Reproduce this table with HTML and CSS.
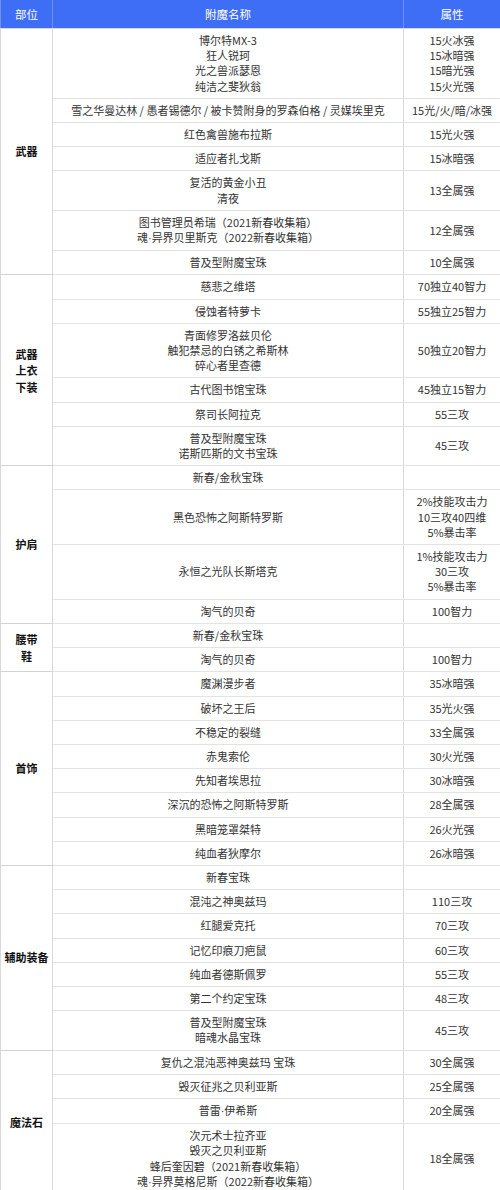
FILE: index.html
```html
<!DOCTYPE html>
<html lang="zh-CN">
<head>
<meta charset="utf-8">
<title>附魔表</title>
<link rel="stylesheet" href="styles.css">
</head>
<body>
<table class="enchant">
  <colgroup>
    <col class="c-part">
    <col class="c-name">
    <col class="c-attr">
  </colgroup>
  <thead>
    <tr><th>部位</th><th>附魔名称</th><th>属性</th></tr>
  </thead>
  <tbody>
    <tr><td class="part" rowspan="7">武器</td><td>博尔特MX-3<br>狂人锐珂<br>光之兽派瑟恩<br>纯洁之斐狄翁</td><td>15火冰强<br>15冰暗强<br>15暗光强<br>15火光强</td></tr>
    <tr><td>雪之华曼达林 / 愚者锡德尔 / 被卡赞附身的罗森伯格 / 灵媒埃里克</td><td>15光/火/暗/冰强</td></tr>
    <tr><td>红色禽兽施布拉斯</td><td>15光火强</td></tr>
    <tr><td>适应者扎戈斯</td><td>15冰暗强</td></tr>
    <tr><td>复活的黄金小丑<br>清夜</td><td>13全属强</td></tr>
    <tr><td>图书管理员希瑞（2021新春收集箱）<br>魂<span class="dot">·</span>异界贝里斯克（2022新春收集箱）</td><td>12全属强</td></tr>
    <tr><td>普及型附魔宝珠</td><td>10全属强</td></tr>

    <tr><td class="part" rowspan="6">武器<br>上衣<br>下装</td><td>慈悲之维塔</td><td>70独立40智力</td></tr>
    <tr><td>侵蚀者特萝卡</td><td>55独立25智力</td></tr>
    <tr><td>青面修罗洛兹贝伦<br>触犯禁忌的白锈之希斯林<br>碎心者里查德</td><td>50独立20智力</td></tr>
    <tr><td>古代图书馆宝珠</td><td>45独立15智力</td></tr>
    <tr><td>祭司长阿拉克</td><td>55三攻</td></tr>
    <tr><td>普及型附魔宝珠<br>诺斯匹斯的文书宝珠</td><td>45三攻</td></tr>

    <tr><td class="part" rowspan="4">护肩</td><td>新春/金秋宝珠</td><td></td></tr>
    <tr><td>黑色恐怖之阿斯特罗斯</td><td>2%技能攻击力<br>10三攻40四维<br>5%暴击率</td></tr>
    <tr><td>永恒之光队长斯塔克</td><td>1%技能攻击力<br>30三攻<br>5%暴击率</td></tr>
    <tr><td>淘气的贝奇</td><td>100智力</td></tr>

    <tr><td class="part" rowspan="2">腰带<br>鞋</td><td>新春/金秋宝珠</td><td></td></tr>
    <tr><td>淘气的贝奇</td><td>100智力</td></tr>

    <tr><td class="part" rowspan="8">首饰</td><td>魔渊漫步者</td><td>35冰暗强</td></tr>
    <tr><td>破坏之王后</td><td>35光火强</td></tr>
    <tr><td>不稳定的裂缝</td><td>33全属强</td></tr>
    <tr><td>赤鬼索伦</td><td>30火光强</td></tr>
    <tr><td>先知者埃思拉</td><td>30冰暗强</td></tr>
    <tr><td>深沉的恐怖之阿斯特罗斯</td><td>28全属强</td></tr>
    <tr><td>黑暗笼罩桀特</td><td>26火光强</td></tr>
    <tr><td>纯血者狄摩尔</td><td>26冰暗强</td></tr>

    <tr><td class="part" rowspan="7">辅助装备</td><td>新春宝珠</td><td></td></tr>
    <tr><td>混沌之神奥兹玛</td><td>110三攻</td></tr>
    <tr><td>红腿爱克托</td><td>70三攻</td></tr>
    <tr><td>记忆印痕刀疤鼠</td><td>60三攻</td></tr>
    <tr><td>纯血者德斯佩罗</td><td>55三攻</td></tr>
    <tr><td>第二个约定宝珠</td><td>48三攻</td></tr>
    <tr><td>普及型附魔宝珠<br>暗魂水晶宝珠</td><td>45三攻</td></tr>

    <tr><td class="part" rowspan="4">魔法石</td><td>复仇之混沌恶神奥兹玛 宝珠</td><td>30全属强</td></tr>
    <tr><td>毁灭征兆之贝利亚斯</td><td>25全属强</td></tr>
    <tr><td>普雷<span class="dot">·</span>伊希斯</td><td>20全属强</td></tr>
    <tr><td>次元术士拉齐亚<br>毁灭之贝利亚斯<br>蜂后奎因碧（2021新春收集箱）<br>魂<span class="dot">·</span>异界莫格尼斯（2022新春收集箱）</td><td>18全属强</td></tr>
  </tbody>
</table>
</body>
</html>
```

FILE: styles.css
```css
html, body {
  margin: 0;
  padding: 0;
  background: #ffffff;
}

body {
  font-family: "Noto Sans CJK SC", "Microsoft YaHei", "Noto Sans", sans-serif;
  font-size: 11px;
  color: #333333;
}

.enchant {
  width: 500px;
  table-layout: fixed;
  border-collapse: collapse;
}

.c-part { width: 52px; }
.c-name { width: 351px; }
.c-attr { width: 97px; }

.enchant th {
  height: 28px;
  padding: 0 2px;
  background: #3f6ef6;
  color: #ffffff;
  font-weight: normal;
  font-size: 11.5px;
  text-align: center;
  vertical-align: middle;
  line-height: 15px;
  border-left: 1px solid #6f92f7;
  border-right: 1px solid #6f92f7;
  border-bottom: 1px solid #d8d8d8;
}

.enchant td {
  padding: 4px 2px;
  line-height: 15.2px;
  text-align: center;
  vertical-align: middle;
  border: 1px solid #e3e3e3;
  border-left-color: #d9d9d9;
  border-right-color: #d9d9d9;
  white-space: nowrap;
}

.enchant td.part {
  font-weight: bold;
  color: #111111;
  line-height: 16.5px;
  border-bottom-color: #d4d4d4;
}

.dot {
  font-family: "Liberation Sans", "Noto Sans", sans-serif;
}
```
